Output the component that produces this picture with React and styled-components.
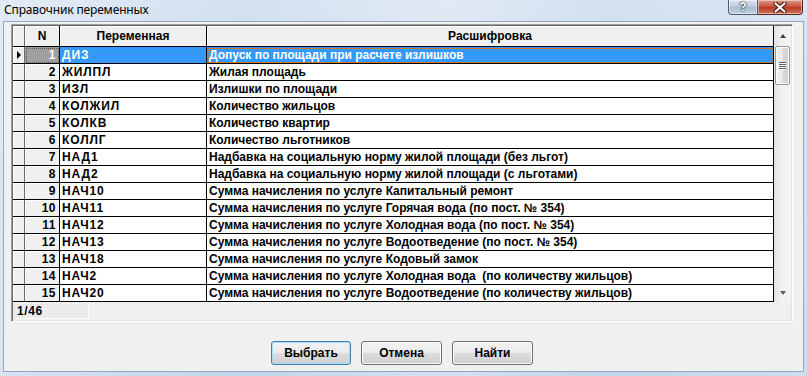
import React from "react";
import styled, { createGlobalStyle } from "styled-components";

const GlobalStyle = createGlobalStyle`
  html, body { margin: 0; padding: 0; }
  body {
    width: 807px; height: 376px; overflow: hidden;
    background: #c8d9eb;
    font-family: "Liberation Sans", Arial, sans-serif;
  }
`;

const ROWS = [
  ["ДИЗ", "Допуск по площади при расчете излишков"],
  ["ЖИЛПЛ", "Жилая площадь"],
  ["ИЗЛ", "Излишки по площади"],
  ["КОЛЖИЛ", "Количество жильцов"],
  ["КОЛКВ", "Количество квартир"],
  ["КОЛЛГ", "Количество льготников"],
  ["НАД1", "Надбавка на социальную норму жилой площади (без льгот)"],
  ["НАД2", "Надбавка на социальную норму жилой площади (с льготами)"],
  ["НАЧ10", "Сумма начисления по услуге Капитальный ремонт"],
  ["НАЧ11", "Сумма начисления по услуге Горячая вода (по пост. № 354)"],
  ["НАЧ12", "Сумма начисления по услуге Холодная вода (по пост. № 354)"],
  ["НАЧ13", "Сумма начисления по услуге Водоотведение (по пост. № 354)"],
  ["НАЧ18", "Сумма начисления по услуге Кодовый замок"],
  ["НАЧ2", "Сумма начисления по услуге Холодная вода  (по количеству жильцов)"],
  ["НАЧ20", "Сумма начисления по услуге Водоотведение (по количеству жильцов)"],
];

const Window = styled.div`
  width: 807px; height: 376px; box-sizing: border-box;
  display: flex; flex-direction: column;
  padding: 0 3px 4px 3px;
  background:
    linear-gradient(90deg, rgba(255,255,255,0.35) 0%, rgba(255,255,255,0) 30%, rgba(255,255,255,0.3) 55%, rgba(255,255,255,0) 75%, rgba(255,255,255,0.2) 100%),
    linear-gradient(180deg, #d3e1f0 0%, #c6d8eb 60%, #c2d5ea 100%);
`;

const TitleBar = styled.div`
  height: 21px; flex: none;
  display: flex; align-items: flex-start;
  margin: 0 -3px; padding: 0 4px 0 4px;
`;

const Title = styled.div`
  font-family: "Noto Sans", "Open Sans", sans-serif;
  font-size: 12px; line-height: 19px; color: #000;
  letter-spacing: -0.15px;
`;

const CaptionButtons = styled.div`
  margin-left: auto; display: flex; height: 15px;
`;

const CapButton = styled.div`
  width: ${p => p.$w}px; height: 15px; box-sizing: border-box;
  display: flex; align-items: center; justify-content: center;
  border: 1px solid ${p => (p.$close ? "#5a2a22" : "#4e5d70")};
  border-top: none;
  ${p => (p.$close
    ? "border-left: none; border-radius: 0 0 4px 0; background: linear-gradient(180deg, #d99a8c 0%, #c8553f 45%, #b93c26 55%, #d4735a 100%);"
    : "border-radius: 0 0 0 4px; background: linear-gradient(180deg, #dbe5f0 0%, #bccbdc 45%, #a9bbd0 55%, #c4d4e6 100%);")}
  box-shadow: inset 0 0 0 1px rgba(255,255,255,0.45);
  color: #fff; font-weight: bold; font-size: 12px;
  font-family: "Liberation Sans", Arial, sans-serif;
  text-shadow: 0 0 1px #2a3a4c, 0 0 1px #2a3a4c, 0 0 2px #2a3a4c;
  line-height: 14px;
`;

const Client = styled.div`
  flex: 1; display: flex; flex-direction: column;
  background: #f0f0f0;
  border: 1px solid #93a8bf;
  padding: 2px 10px 0 7px;
`;

const Panel = styled.div`
  height: 298px; box-sizing: border-box;
  border: 1px solid; border-color: #a0a0a0 #ffffff #ffffff #a0a0a0;
  box-shadow: inset 1px 1px 0 #696969, inset -1px -1px 0 #e3e3e3;
  padding: 1px;
  display: flex; flex-direction: column;
`;

const GridArea = styled.div`
  display: flex; height: 276px; flex: none;
`;

const Table = styled.div`
  width: 761px; display: flex; flex-direction: column;
  font-size: 12px; font-weight: bold; color: #000;
  background: #fff;
`;

const Row = styled.div`
  display: flex; height: ${p => p.$h || 17}px; flex: none;
`;

const Cell = styled.div`
  box-sizing: border-box; flex: none;
  width: ${p => p.$w}px; height: 100%;
  border-right: 1px solid #000; border-bottom: 1px solid #000;
  display: flex; align-items: center;
  white-space: pre; overflow: hidden;
  padding: 0 2px;
  letter-spacing: ${p => p.$ls || 0}px;
`;

const HeadCell = styled(Cell)`
  background: #f0f0f0;
  justify-content: center;
  box-shadow: inset 1px 1px 0 #ffffff;
  border-right-color: ${p => (p.$gray ? "#696969" : "#000")};
`;

const IndicatorCell = styled(Cell)`
  background: #f0f0f0;
  border-right-color: #696969;
  padding: 0 0 0 4px;
  box-shadow: inset 1px 1px 0 #ffffff;
`;

const Arrow = styled.div`
  width: 0; height: 0;
  border-left: 4px solid #000;
  border-top: 4px solid transparent;
  border-bottom: 4px solid transparent;
`;

const NumCell = styled(Cell)`
  justify-content: flex-end; padding-right: 3px;
  letter-spacing: 0.5px;
  background: ${p => (p.$sel ? "#a0a0a0" : "#f0f0f0")};
  color: ${p => (p.$sel ? "#fff" : "#000")};
  box-shadow: ${p => (p.$sel ? "none" : "inset 1px 1px 0 #ffffff")};
  ${p => p.$sel && "outline: 1px dotted #555; outline-offset: -2px;"}
`;

const DataCell = styled(Cell)`
  background: ${p => (p.$sel ? "#3399ff" : "#fff")};
  color: ${p => (p.$sel ? "#fff" : "#000")};
  ${p => p.$sel && "outline: 1px dotted #d4782c; outline-offset: -2px;"}
`;

const ScrollBar = styled.div`
  width: 17px; flex: none; display: flex; flex-direction: column;
  background: linear-gradient(90deg, #e3e3e3 0%, #f0f0f0 40%, #f4f4f4 100%);
`;

const ScrollArrow = styled.div`
  height: 19px; flex: none; display: flex; align-items: center; justify-content: center;
`;

const Tri = styled.div`
  width: 0; height: 0;
  border-left: 3.5px solid transparent; border-right: 3.5px solid transparent;
  ${p => (p.$down ? "border-top: 4px solid #606060;" : "border-bottom: 4px solid #404040;")}
`;

const Thumb = styled.div`
  height: 39px; margin: 1px 1px 0 1px; box-sizing: border-box;
  border: 1px solid #989898; border-radius: 2px;
  background: linear-gradient(90deg, #f4f4f4 0%, #e8e8e8 50%, #d9d9d9 51%, #cfcfcf 100%);
  box-shadow: inset 0 0 0 1px #fbfbfb;
  display: flex; flex-direction: column; align-items: center; justify-content: center; gap: 1px;
`;

const Grip = styled.div`
  width: 7px; height: 1px; background: #5f5f5f;
  box-shadow: 0 1px 0 #ffffff;
`;

const Track = styled.div`flex: 1;`;

const Status = styled.div`
  height: 18px; display: flex; align-items: flex-start; padding: 2px 0 0 1px;
`;

const StatusBox = styled.div`
  width: 75px; height: 15px; box-sizing: border-box;
  border: 1px solid; border-color: #e6e6e6 #fbfbfb #fbfbfb #e6e6e6;
  background: #ececec;
  font-size: 12px; font-weight: bold; line-height: 13px; padding-left: 2px;
  letter-spacing: 0.6px;
`;

const ButtonRow = styled.div`
  display: flex; justify-content: center; gap: 10px;
  margin-top: 19px;
`;

const Button = styled.button`
  width: ${p => p.$w}px; height: 24px; box-sizing: border-box;
  font-family: "Liberation Sans", Arial, sans-serif;
  font-size: 12px; font-weight: bold; color: #000;
  border-radius: 3px; padding: 0;
  border: 1px solid ${p => (p.$def ? "#3c7fb1" : "#707070")};
  background: linear-gradient(180deg, #f2f2f2 0%, #ebebeb 48%, #dddddd 52%, #cfcfcf 100%);
  box-shadow: inset 0 0 0 1px ${p => (p.$def ? "#a9dcf7" : "#fbfbfb")};
`;

export default function App() {
  return (
    <>
      <GlobalStyle />
      <Window>
        <TitleBar>
          <Title>Справочник переменных</Title>
          <CaptionButtons>
            <CapButton $w={30}>?</CapButton>
            <CapButton $w={45} $close>
              <svg width="14" height="11" viewBox="0 0 14 11">
                <path d="M2.5 1.5 L11.5 9.5 M11.5 1.5 L2.5 9.5" stroke="#3a1a14" strokeWidth="4.2" strokeLinecap="round" />
                <path d="M2.5 1.5 L11.5 9.5 M11.5 1.5 L2.5 9.5" stroke="#fff" strokeWidth="2.2" strokeLinecap="round" />
              </svg>
            </CapButton>
          </CaptionButtons>
        </TitleBar>
        <Client>
          <Panel>
            <GridArea>
              <Table>
                <Row $h={21}>
                  <HeadCell $w={12} $gray />
                  <HeadCell $w={35}>N</HeadCell>
                  <HeadCell $w={147}>Переменная</HeadCell>
                  <HeadCell $w={567}>Расшифровка</HeadCell>
                </Row>
                {ROWS.map(([v, d], i) => {
                  const sel = i === 0;
                  return (
                    <Row key={v}>
                      <IndicatorCell $w={12}>{sel && <Arrow />}</IndicatorCell>
                      <NumCell $w={35} $sel={sel}>{i + 1}</NumCell>
                      <DataCell $w={147} $sel={sel} $ls={0.9}>{v}</DataCell>
                      <DataCell $w={567} $sel={sel}>{d}</DataCell>
                    </Row>
                  );
                })}
              </Table>
              <ScrollBar>
                <ScrollArrow><Tri /></ScrollArrow>
                <Thumb><Grip /><Grip /><Grip /><Grip /></Thumb>
                <Track />
                <ScrollArrow><Tri $down /></ScrollArrow>
              </ScrollBar>
            </GridArea>
            <Status>
              <StatusBox>1/46</StatusBox>
            </Status>
          </Panel>
          <ButtonRow>
            <Button $w={80} $def>Выбрать</Button>
            <Button $w={81}>Отмена</Button>
            <Button $w={81}>Найти</Button>
          </ButtonRow>
        </Client>
      </Window>
    </>
  );
}
